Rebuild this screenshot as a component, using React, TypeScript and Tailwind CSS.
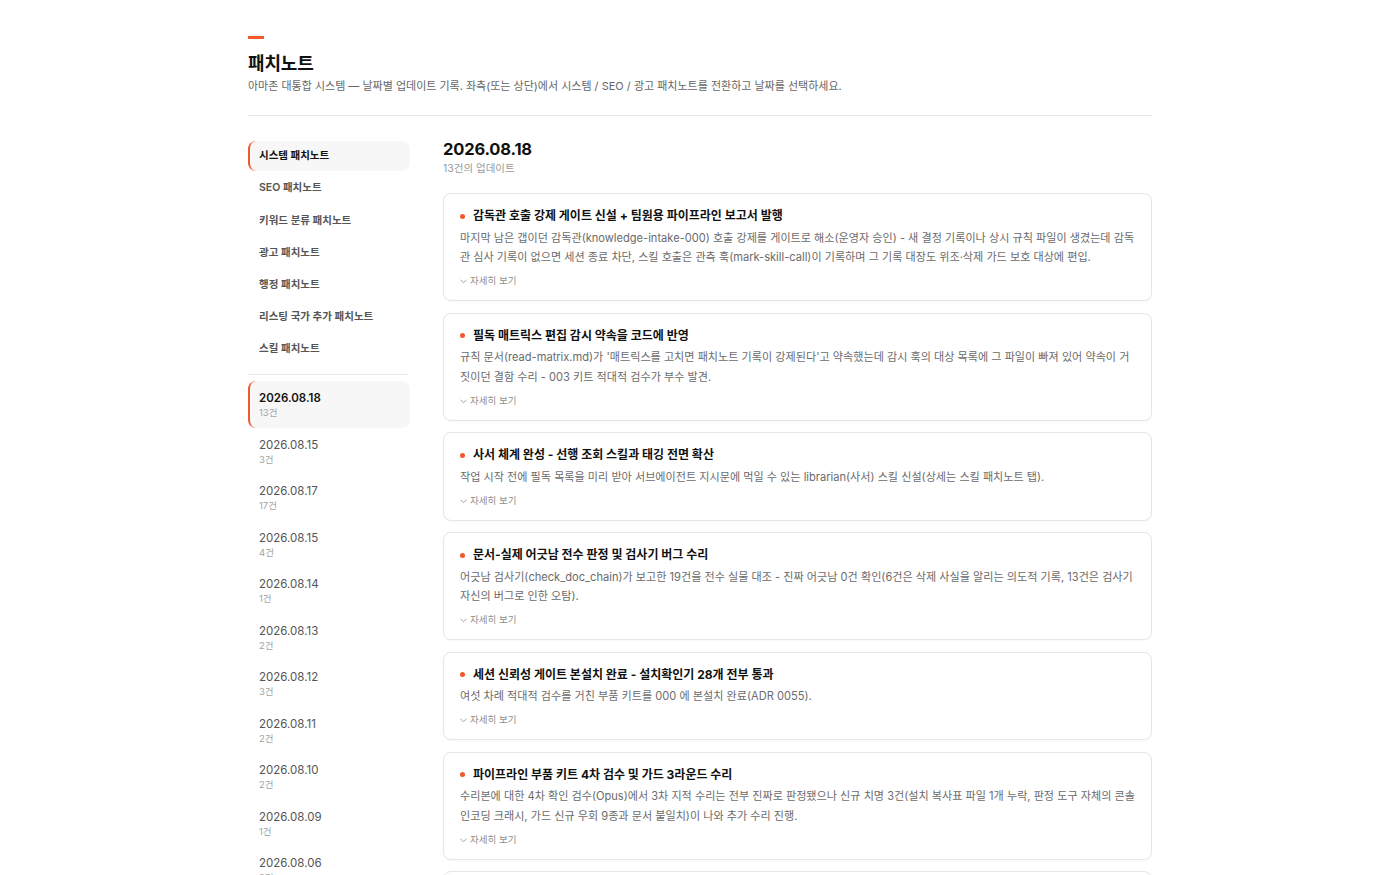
const NAV = [
  "시스템 패치노트",
  "SEO 패치노트",
  "키워드 분류 패치노트",
  "광고 패치노트",
  "행정 패치노트",
  "리스팅 국가 추가 패치노트",
  "스킬 패치노트",
];

const DATES = [
  { date: "2026.08.18", count: "13건" },
  { date: "2026.08.15", count: "3건" },
  { date: "2026.08.17", count: "17건" },
  { date: "2026.08.15", count: "4건" },
  { date: "2026.08.14", count: "1건" },
  { date: "2026.08.13", count: "2건" },
  { date: "2026.08.12", count: "3건" },
  { date: "2026.08.11", count: "2건" },
  { date: "2026.08.10", count: "2건" },
  { date: "2026.08.09", count: "1건" },
  { date: "2026.08.06", count: "3건" },
];

const NOTES = [
  {
    title: "감독관 호출 강제 게이트 신설 + 팀원용 파이프라인 보고서 발행",
    body: "마지막 남은 갭이던 감독관(knowledge-intake-000) 호출 강제를 게이트로 해소(운영자 승인) - 새 결정 기록이나 상시 규칙 파일이 생겼는데 감독관 심사 기록이 없으면 세션 종료 차단, 스킬 호출은 관측 훅(mark-skill-call)이 기록하며 그 기록 대장도 위조·삭제 가드 보호 대상에 편입.",
  },
  {
    title: "필독 매트릭스 편집 감시 약속을 코드에 반영",
    body: "규칙 문서(read-matrix.md)가 '매트릭스를 고치면 패치노트 기록이 강제된다'고 약속했는데 감시 훅의 대상 목록에 그 파일이 빠져 있어 약속이 거짓이던 결함 수리 - 003 키트 적대적 검수가 부수 발견.",
  },
  {
    title: "사서 체계 완성 - 선행 조회 스킬과 태깅 전면 확산",
    body: "작업 시작 전에 필독 목록을 미리 받아 서브에이전트 지시문에 먹일 수 있는 librarian(사서) 스킬 신설(상세는 스킬 패치노트 탭).",
  },
  {
    title: "문서-실제 어긋남 전수 판정 및 검사기 버그 수리",
    body: "어긋남 검사기(check_doc_chain)가 보고한 19건을 전수 실물 대조 - 진짜 어긋남 0건 확인(6건은 삭제 사실을 알리는 의도적 기록, 13건은 검사기 자신의 버그로 인한 오탐).",
  },
  {
    title: "세션 신뢰성 게이트 본설치 완료 - 설치확인기 28개 전부 통과",
    body: "여섯 차례 적대적 검수를 거친 부품 키트를 000 에 본설치 완료(ADR 0055).",
  },
  {
    title: "파이프라인 부품 키트 4차 검수 및 가드 3라운드 수리",
    body: "수리본에 대한 4차 확인 검수(Opus)에서 3차 지적 수리는 전부 진짜로 판정됐으나 신규 치명 3건(설치 복사표 파일 1개 누락, 판정 도구 자체의 콘솔 인코딩 크래시, 가드 신규 우회 9종과 문서 불일치)이 나와 추가 수리 진행.",
  },
  {
    title: "세션 종료 가드 2라운드 수리 및 회귀 테스트 추가",
    body: "2차 검수에서 지적된 우회 경로를 막고 회귀 테스트를 추가.",
  },
];

function Chevron() {
  return (
    <svg width="7" height="5" viewBox="0 0 7 5" fill="none" className="mt-px">
      <path d="M0.8 1 L3.5 3.8 L6.2 1" stroke="#9a9a9a" strokeWidth="0.9" strokeLinecap="round" strokeLinejoin="round" />
    </svg>
  );
}

export default function App() {
  return (
    <div
      className="min-h-screen bg-white text-[#111]"
      style={{ fontFamily: '"Inter", "Noto Sans CJK KR", sans-serif' }}
    >
      <div className="mx-auto max-w-[904px] pt-9 pb-10">
        <header className="border-b border-[#e8e8e8] pb-[21px]">
          <div className="h-[3px] w-4 bg-[#f0592a]" />
          <h1 className="mt-3 text-[18px] font-bold leading-[26px] tracking-[-0.01em]">
            패치노트
          </h1>
          <p className="mt-px text-[11px] leading-4 text-[#666]">
            아마존 대통합 시스템 — 날짜별 업데이트 기록. 좌측(또는 상단)에서 시스템 / SEO / 광고 패치노트를 전환하고 날짜를 선택하세요.
          </p>
        </header>

        <div className="mt-[25px] flex gap-[33px]">
          <aside className="w-[162px] shrink-0">
            <nav className="flex flex-col gap-[2.2px]">
              {NAV.map((item, i) => (
                <div
                  key={item}
                  className={
                    i === 0
                      ? "flex h-[30px] items-center rounded-lg border-l-2 border-[#f0592a] bg-[#f7f7f7] pl-[9px] text-[10.5px] font-bold text-[#111]"
                      : "flex h-[30px] items-center pl-[11px] text-[10.5px] font-semibold text-[#555]"
                  }
                >
                  {item}
                </div>
              ))}
            </nav>

            <div className="mt-[10px] mb-[6px] h-px w-[160px] bg-[#e8e8e8]" />

            <div className="flex flex-col">
              {DATES.map((d, i) => (
                <div
                  key={i}
                  className={
                    i === 0
                      ? "rounded-lg border-l-2 border-[#f0592a] bg-[#f7f7f7] pb-[7.5px] pl-[9px] pt-[9px]"
                      : "pb-[7.5px] pl-[11px] pt-[9px]"
                  }
                >
                  <div
                    className={
                      i === 0
                        ? "text-[11.5px] font-semibold leading-4 text-[#111]"
                        : "text-[11.5px] leading-4 text-[#555]"
                    }
                  >
                    {d.date}
                  </div>
                  <div className="text-[9.5px] leading-[14px] text-[#a3a3a3]">{d.count}</div>
                </div>
              ))}
            </div>
          </aside>

          <main className="min-w-0 flex-1">
            <h2 className="text-[16.5px] font-bold leading-[17px] tracking-[-0.01em]">2026.08.18</h2>
            <p className="mt-[3px] text-[10.5px] leading-4 text-[#9a9a9a]">13건의 업데이트</p>

            <div className="mt-4 flex flex-col gap-[11.5px]">
              {NOTES.map((n) => (
                <article
                  key={n.title}
                  className="rounded-lg border border-[#e6e6e6] bg-white px-4 pb-3 pt-[13px] shadow-[0_1px_2px_rgba(0,0,0,0.03)]"
                >
                  <div className="flex items-center gap-2">
                    <span className="h-[5px] w-[5px] shrink-0 rounded-full bg-[#f0592a]" />
                    <h3 className="text-[12px] font-bold leading-[18px] text-[#111]">{n.title}</h3>
                  </div>
                  <p className="mt-[3.5px] text-[11.1px] leading-[19.5px] text-[#6b6b6b]">{n.body}</p>
                  <div className="mt-[6.5px] flex items-center gap-[3px] text-[9.5px] leading-[14px] text-[#8f8f8f]">
                    <Chevron />
                    <span>자세히 보기</span>
                  </div>
                </article>
              ))}
            </div>
          </main>
        </div>
      </div>
    </div>
  );
}
